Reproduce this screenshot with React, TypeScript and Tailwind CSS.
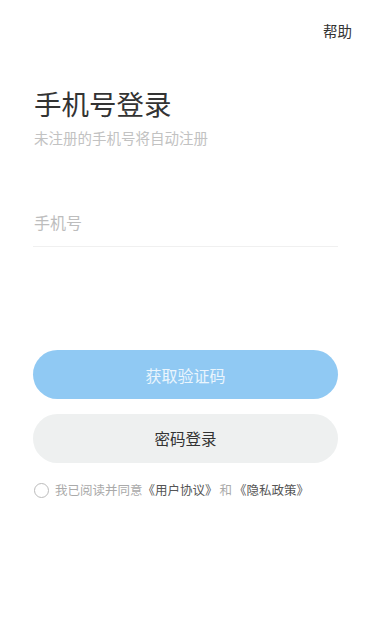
import { useState } from 'react';

export default function App() {
  const [phone, setPhone] = useState('');
  const [agreed, setAgreed] = useState(false);

  return (
    <div
      className="min-h-[637px] bg-white"
      style={{ fontFamily: '"Noto Sans CJK SC", "Noto Sans", sans-serif' }}
    >
      <div className="flex justify-end pt-[20px] pr-[19px]">
        <span className="text-[14.5px] leading-[22px] text-[#333]">帮助</span>
      </div>

      <div className="px-[33px]">
        <h1 className="mt-[43px] pl-[1px] text-[27.5px] leading-[36px] font-normal text-[#333]">
          手机号登录
        </h1>
        <p className="mt-[7px] pl-[1px] text-[14.5px] leading-[20px] text-[#c2c2c2]">
          未注册的手机号将自动注册
        </p>

        <div className="mt-[50px] border-b border-[#f0f0f0]">
          <input
            value={phone}
            onChange={(e) => setPhone(e.target.value)}
            placeholder="手机号"
            className="h-[48px] w-full pl-[1px] text-[16px] text-[#333] outline-none placeholder:text-[#bdbdbd]"
          />
        </div>

        <button className="mt-[103px] flex h-[49px] w-full items-center justify-center rounded-full bg-[#90c9f3] text-[16px] text-[#eaf5fd]">
          获取验证码
        </button>
        <button className="mt-[15px] flex h-[49px] w-full items-center justify-center rounded-full bg-[#eef0f0] text-[15.5px] text-[#333]">
          密码登录
        </button>

        <div className="mt-[17px] flex items-center gap-[6px] pl-[1px]">
          <button
            onClick={() => setAgreed(!agreed)}
            className="h-[15px] w-[15px] rounded-full border border-[#bbb]"
          />
          <span className="text-[12.5px] leading-[20px] text-[#aaa]">
            我已阅读并同意<span className="text-[#555]">《用户协议》</span>
            <span className="mx-[2px]">和</span>
            <span className="text-[#555]">《隐私政策》</span>
          </span>
        </div>
      </div>
    </div>
  );
}
